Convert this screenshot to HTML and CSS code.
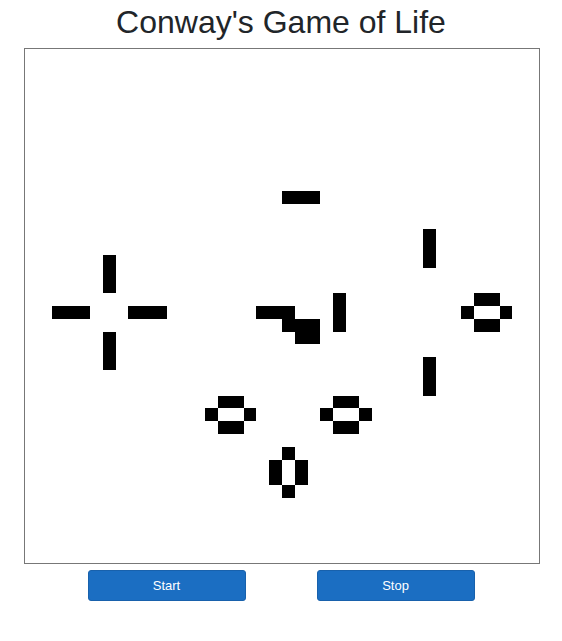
FILE: index.html
```html
<!DOCTYPE html>
<html>
<head>
<meta charset="utf-8">
<title>Conway's Game of Life</title>
<link rel="stylesheet" href="styles.css">
</head>
<body>
<div class="app">
  <h1 class="title">Conway's Game of Life</h1>
  <div class="board">
    <svg class="grid" width="512" height="512" viewBox="0 0 40 40" shape-rendering="crispEdges">
      <g fill="#000">
        <rect x="2" y="20" width="3" height="1"/>
        <rect x="8" y="20" width="3" height="1"/>
        <rect x="6" y="16" width="1" height="3"/>
        <rect x="6" y="22" width="1" height="3"/>
        <rect x="20" y="11" width="3" height="1"/>
        <rect x="18" y="20" width="3" height="1"/>
        <rect x="20" y="21" width="3" height="1"/>
        <rect x="21" y="22" width="2" height="1"/>
        <rect x="24" y="19" width="1" height="3"/>
        <rect x="31" y="14" width="1" height="3"/>
        <rect x="31" y="24" width="1" height="3"/>
        <rect x="35" y="19" width="2" height="1"/>
        <rect x="34" y="20" width="1" height="1"/>
        <rect x="37" y="20" width="1" height="1"/>
        <rect x="35" y="21" width="2" height="1"/>
        <rect x="15" y="27" width="2" height="1"/>
        <rect x="14" y="28" width="1" height="1"/>
        <rect x="17" y="28" width="1" height="1"/>
        <rect x="15" y="29" width="2" height="1"/>
        <rect x="24" y="27" width="2" height="1"/>
        <rect x="23" y="28" width="1" height="1"/>
        <rect x="26" y="28" width="1" height="1"/>
        <rect x="24" y="29" width="2" height="1"/>
        <rect x="20" y="31" width="1" height="1"/>
        <rect x="19" y="32" width="1" height="2"/>
        <rect x="21" y="32" width="1" height="2"/>
        <rect x="20" y="34" width="1" height="1"/>
      </g>
    </svg>
  </div>
  <div class="controls">
    <button class="btn">Start</button>
    <button class="btn">Stop</button>
  </div>
</div>
</body>
</html>
```
FILE: styles.css
```css
html, body {
  margin: 0;
  padding: 0;
  background: #fff;
}
body {
  font-family: "Liberation Sans", Arial, Helvetica, sans-serif;
  color: #212529;
}
.app {
  display: flex;
  flex-direction: column;
  align-items: center;
  padding-left: 2px;
}
.title {
  margin: 3px 2px 7px 0;
  font-size: 32px;
  font-weight: 400;
  line-height: 38px;
  color: #212529;
}
.board {
  border: 1px solid #777;
  padding: 1px;
  background: #fff;
  line-height: 0;
}
.grid {
  display: block;
}
.controls {
  display: flex;
  justify-content: center;
  gap: 71px;
  margin: 6px 2px 0 0;
}
.btn {
  width: 158px;
  height: 31px;
  background: #1b6ec2;
  border: 1px solid #1861ac;
  border-radius: 3px;
  color: #fff;
  font-family: "Liberation Sans", Arial, Helvetica, sans-serif;
  font-size: 13px;
  padding: 0;
}
```
